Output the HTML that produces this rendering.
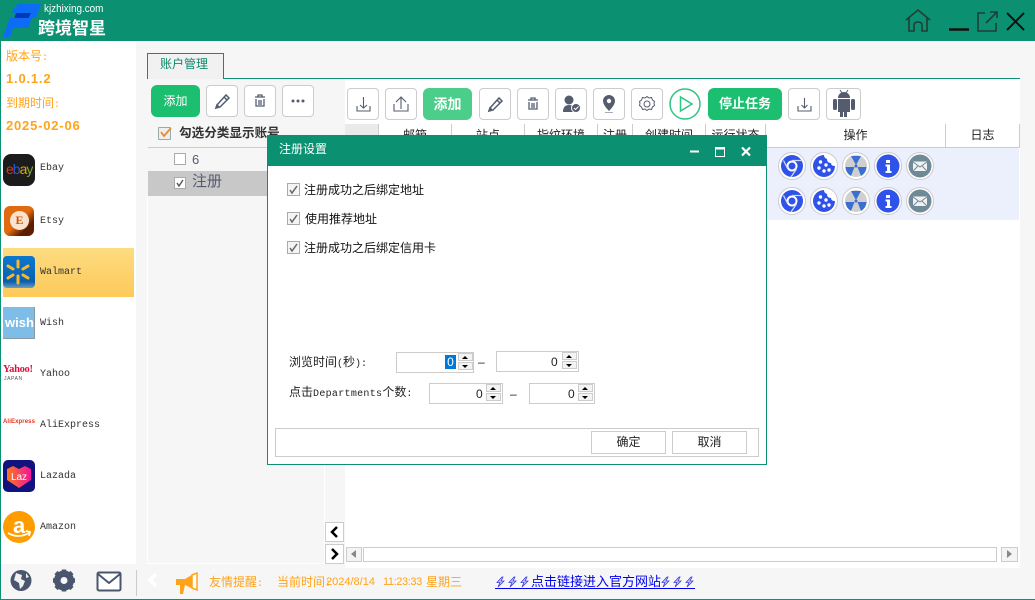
<!DOCTYPE html>
<html lang="zh"><head><meta charset="utf-8"><title>跨境智星</title>
<style>
*{box-sizing:border-box}
html,body{margin:0;padding:0}
body{width:1035px;height:600px;overflow:hidden;position:relative;background:#f6f6f6;font-family:"Liberation Sans","WenQuanYi Zen Hei","Noto Sans CJK SC",sans-serif;font-size:12px;color:#222}
.a,.a *{position:absolute}
.a{position:absolute}
.t{position:absolute;white-space:nowrap;line-height:1}
.btn{position:absolute;top:0;width:32px;height:32px;background:#fff;border:1px solid #ccc;border-radius:4px}
.btn svg{position:absolute;left:0;top:0}
.g{position:absolute;border-radius:6px;color:#fff;text-align:center;font-weight:bold;font-size:14px;line-height:32px;background:#1bbf6f}
.m{position:absolute;left:40px;font:10px "Liberation Mono",monospace;color:#333;white-space:nowrap;line-height:12px}
.p{font:10px "Liberation Mono",monospace}
.cb{position:absolute;width:13px;height:13px;background:#f4f4f4;border:1px solid #aaa}
.cb svg{position:absolute;left:0;top:0}
.th{position:absolute;top:124px;height:24px;border-right:1px solid #ccc;text-align:center;font-size:12px;line-height:23px;color:#222;background:#fff}
.spin{position:absolute;background:#fff;border:1px solid #ccc;height:21px}
.ud{position:absolute;top:1px;width:15px;height:17px;background:#fff}
.ud i{position:absolute;left:0;width:15px;height:8px;background:#f3f3f3;border:1px solid #ccc}
.ud b{position:absolute;left:4px;width:0;height:0;border-left:3.5px solid transparent;border-right:3.5px solid transparent}
.ic{position:absolute;width:28px;height:28px;border-radius:50%;background:#fff;border:1px solid #ccc}
.ic svg{position:absolute;left:1px;top:1px}
.dbtn{position:absolute;top:431px;height:23px;width:75px;background:#fff;border:1px solid #ccc;text-align:center;line-height:21px;font-size:12px}
.or{color:#ffa31a}
</style></head><body>

<!-- header -->
<div class="a" style="left:0;top:0;width:1035px;height:41px;background:#0b9172"></div>
<svg class="a" style="left:0;top:0" width="110" height="41" viewBox="0 0 110 41">
<path d="M17 4H41L36 18H28L30 13H15z" fill="#0d6cf5"/>
<path d="M14 8h8l-2 5h-8z" fill="#0d6cf5"/>
<path d="M16 13H31L28 19H14z" fill="#0637b8"/>
<path d="M10 18H32L28 28H13L10 37H3z" fill="#0d6cf5"/>
</svg>
<div class="t" style="left:44px;top:4px;font-size:11px;color:#fff;transform:scaleX(.9);transform-origin:0 0">kjzhixing.com</div>
<div class="t" style="left:38px;top:20px;font-size:17px;font-weight:bold;color:#fff">跨境智星</div>
<svg class="a" style="left:900px;top:5px" width="135" height="30" viewBox="0 0 135 30" fill="none" stroke="#223c37" stroke-width="1.600">
<path d="M6 15 18 5l12 10M9 13v13h5v-6q0-3 4-3t4 3v6h5V13"/>
<path d="M49 24.500h20" stroke="#111" stroke-width="2.400"/>
<path d="M85 8h-7v18h18v-8M86 18 96 8M90 7h7v6"/>
<path d="M107 8 124 25M124 8 107 25" stroke="#111" stroke-width="2"/>
</svg>

<!-- sidebar -->
<div class="a" style="left:0;top:41px;width:1px;height:559px;background:#0b9172"></div>
<div class="a" style="left:1px;top:41px;width:135px;height:523px;background:#fff"></div>
<div class="t or" style="left:6px;top:50px;font-size:12px">版本号<span class="p">:</span></div>
<div class="t or" style="left:6px;top:71px;font:bold 13px 'Liberation Sans',sans-serif;letter-spacing:.8px">1.0.1.2</div>
<div class="t or" style="left:6px;top:97px;font-size:12px">到期时间<span class="p">:</span></div>
<div class="t or" style="left:6px;top:118px;font:bold 13px 'Liberation Sans',sans-serif;letter-spacing:.8px">2025-02-06</div>

<div class="a" style="left:3px;top:154px;width:32px;height:32px;border-radius:8px;background:#1c1c1c;overflow:hidden"><div class="t" style="left:3px;top:8px;font-size:14px;color:#d32;letter-spacing:-1px">e<span style="position:static;color:#2a5bd0">b</span><span style="position:static;color:#e0a800">a</span><span style="position:static;color:#7a3">y</span></div></div>
<div class="m" style="top:163px;margin-top:0">Ebay</div>
<div class="a" style="left:4px;top:206px;width:30px;height:30px;border-radius:6px;background:linear-gradient(135deg,#e06a10 50%,#5c1e00 75%)"><div class="a" style="left:6px;top:5px;width:19px;height:19px;border-radius:50%;background:#f7e3cf;color:#d35400;font:bold 12px/19px 'Liberation Serif',serif;text-align:center">E</div></div>
<div class="m" style="top:214px">Etsy</div>
<div class="a" style="left:3px;top:248px;width:131px;height:49px;background:linear-gradient(#fddc80,#fdc95a)"></div>
<div class="a" style="left:3px;top:256px;width:32px;height:32px;border-radius:4px;background:linear-gradient(#0b78d0,#0a5fae 80%,#6d9dbf)">
<svg width="32" height="32" viewBox="0 0 32 32" stroke="#fbb72c" stroke-width="3" stroke-linecap="round"><path d="M15 5v6M15 20v7M5 10l5 3M25 10l-5 3M5 22l5-3M25 22l-5-3"/></svg></div>
<div class="m" style="top:265px">Walmart</div>
<div class="a" style="left:3px;top:307px;width:32px;height:32px;background:#7dbde8;border-right:1px solid #8a9aa5;border-bottom:1px solid #8a9aa5"><div class="t" style="left:2px;top:9px;font-size:13px;font-weight:bold;color:#fff">wish</div></div>
<div class="m" style="top:316px">Wish</div>
<div class="t" style="left:3px;top:364px;font:bold 10.500px 'Liberation Serif',serif;color:#e0103a;letter-spacing:-.3px">Yahoo!</div>
<div class="t" style="left:4px;top:376px;font:5px 'Liberation Sans',sans-serif;color:#555;letter-spacing:.6px">JAPAN</div>
<div class="m" style="top:367px">Yahoo</div>
<div class="t" style="left:3px;top:419px;font:bold 6px 'Liberation Sans',sans-serif;color:#e8341c;letter-spacing:.1px">AliExpress</div>
<div class="m" style="top:418px">AliExpress</div>
<div class="a" style="left:3px;top:460px;width:32px;height:32px;border-radius:5px;background:#10127e">
<svg width="32" height="32" viewBox="0 0 32 32"><defs><linearGradient id="lz" x1="0" x2="1"><stop offset="0" stop-color="#f7791c"/><stop offset="1" stop-color="#f3149a"/></linearGradient></defs><path d="M4 9l6-3 6 3 6-3 6 3v11l-12 8L4 20z" fill="url(#lz)"/><text x="16" y="20" font-size="10" fill="#fff" text-anchor="middle" font-family="Liberation Sans">Laz</text></svg></div>
<div class="m" style="top:469px">Lazada</div>
<div class="a" style="left:3px;top:511px;width:32px;height:32px;border-radius:50%;background:#ff9c00">
<div class="t" style="left:10px;top:2px;font:bold 22px 'Liberation Sans',sans-serif;color:#fff">a</div>
<svg width="32" height="32" viewBox="0 0 32 32" fill="none" stroke="#fff" stroke-width="1.800"><path d="M5 22q10 6 21 0M23 20l4 1-1 4"/></svg></div>
<div class="m" style="top:520px">Amazon</div>

<!-- tab -->
<div class="a" style="left:147px;top:53px;width:77px;height:26px;background:#f1f1f1;border:1px solid #0b9172;border-bottom:0"></div>
<div class="t" style="left:160px;top:58px;font-size:12px;color:#0b8a6c">账户管理</div>
<div class="a" style="left:224px;top:78px;width:796px;height:1px;background:#0b9172"></div>

<!-- left account panel -->
<div class="a" style="left:148px;top:79px;width:197px;height:84px;background:#f6f6f6"></div>
<div class="g" style="left:151px;top:85px;width:49px;height:32px;font-weight:normal;font-size:12px">添加</div>
<div class="a" style="left:206px;top:85px;width:108px;height:32px">
<div class="btn" style="left:0"><svg width="30" height="30" viewBox="0 0 30 30" fill="none" stroke="#555c70" stroke-width="1.500"><path d="M10 19l-1 3 4-1 9-9-3-3zM17 11l3 3"/><path d="M10 19l2 2-3 1z" fill="#555c70"/></svg></div>
<div class="btn" style="left:38px"><svg width="30" height="30" viewBox="0 0 30 30" fill="none" stroke="#555c70" stroke-width="1.300"><path d="M10 11h10M13 11V9h4v2M11 13v7h8v-7M14 14v5M16 14v5"/></svg></div>
<div class="btn" style="left:76px"><svg width="30" height="30" viewBox="0 0 30 30" fill="#555c70"><circle cx="10" cy="15" r="1.500"/><circle cx="15" cy="15" r="1.500"/><circle cx="20" cy="15" r="1.500"/></svg></div>
</div>
<div class="a" style="left:158px;top:127px;width:13px;height:13px;background:#eee;border:1px solid #9aa;border-radius:1px"><svg class="a" style="left:0;top:-2px" width="14" height="14" viewBox="0 0 14 14" fill="none" stroke="#e0902a" stroke-width="1.800"><path d="M2 6l3 4 7-8"/></svg></div>
<div class="t" style="left:179px;top:127px;font-size:12.600px;font-weight:bold;color:#333">勾选分类显示账号</div>
<div class="a" style="left:148px;top:147px;width:176px;height:1px;background:#ccc"></div>
<div class="a" style="left:148px;top:148px;width:119px;height:22px;background:#f6f6f6"></div>
<div class="cb" style="left:174px;top:153px;background:#fff;width:12px;height:12px"></div>
<div class="t" style="left:192px;top:153px;font-size:13px;color:#555c70">6</div>
<div class="a" style="left:148px;top:171px;width:119px;height:25px;background:#c8c8c8"></div>
<div class="cb" style="left:174px;top:177px;background:#fff;width:12px;height:12px"><svg width="10" height="10" viewBox="0 0 10 10" fill="none" stroke="#555" stroke-width="1.400"><path d="M2 5l2 3 4-6"/></svg></div>
<div class="t" style="left:192px;top:174px;font-size:15px;color:#555c70">注册</div>

<!-- lower left panel -->
<div class="a" style="left:147px;top:196px;width:178px;height:368px;border:1px solid #fff;border-top:0;background:#f6f6f6"></div>

<!-- main white -->
<div class="a" style="left:345px;top:79px;width:675px;height:489px;background:#fff"></div>
<div class="a" style="left:325px;top:196px;width:20px;height:372px;background:#f6f6f6"></div>

<!-- toolbar -->
<div class="a" style="left:347px;top:88px;width:520px;height:32px">
<div class="btn" style="left:0"><svg width="30" height="30" viewBox="0 0 30 30" fill="none" stroke="#555c70" stroke-width="1.100"><path d="M9 17v5h13v-5M15.500 8v11M12 16l3.500 3 3.500-3"/></svg></div>
<div class="btn" style="left:38px"><svg width="30" height="30" viewBox="0 0 30 30" fill="none" stroke="#555c70" stroke-width="1.100"><path d="M8 15v7h14v-7M15 20V8M10 13l5-5 5 5"/></svg></div>
<div class="g" style="left:76px;top:0;width:49px;height:32px;background:#4bce8a">添加</div>
<div class="btn" style="left:132px"><svg width="30" height="30" viewBox="0 0 30 30" fill="none" stroke="#555c70" stroke-width="1.500"><path d="M10 19l-1 3 4-1 9-9-3-3zM17 11l3 3"/><path d="M10 19l2 2-3 1z" fill="#555c70"/></svg></div>
<div class="btn" style="left:170px"><svg width="30" height="30" viewBox="0 0 30 30" fill="none" stroke="#555c70" stroke-width="1.300"><path d="M10 11h10M13 11V9h4v2M11 13v7h8v-7M14 14v5M16 14v5"/></svg></div>
<div class="btn" style="left:208px"><svg width="30" height="30" viewBox="0 0 30 30"><circle cx="13" cy="11" r="4.500" fill="#555c70"/><path d="M7 23q0-7 6-7 3 0 5 2v5z" fill="#555c70"/><circle cx="20" cy="19" r="4.500" fill="#555c70" stroke="#fff"/><path d="M18 19l1.500 1.500 3-3" fill="none" stroke="#fff"/></svg></div>
<div class="btn" style="left:246px"><svg width="30" height="30" viewBox="0 0 30 30"><path d="M15 6a6 6 0 0 0-6 6q0 4 6 10 6-6 6-10a6 6 0 0 0-6-6z" fill="#555c70"/><circle cx="15" cy="12" r="2.200" fill="#fff"/><path d="M11 23.500h8" stroke="#aab" fill="none"/></svg></div>
<div class="btn" style="left:284px"><svg width="30" height="30" viewBox="0 0 30 30" fill="none" stroke="#555c70"><path d="M15 8l2 1.500 2.500-.5 1 2.500 2 1.500-.5 2 .5 2-2 1.500-1 2.500-2.500-.5-2 1.500-2-1.500-2.500.5-1-2.500-2-1.500.5-2-.5-2 2-1.500 1-2.500 2.500.5z" transform="translate(0 -.5)"/><circle cx="15" cy="15" r="3"/></svg></div>
<svg class="a" style="left:322px;top:0" width="32" height="32" viewBox="0 0 32 32" fill="none" stroke="#2fc482" stroke-width="1.500"><circle cx="16" cy="16" r="15"/><path d="M11.500 9v14L23 16z"/></svg>
<div class="g" style="left:361px;top:0;width:74px;height:32px;background:#1bbf6f;font-size:13px">停止任务</div>
<div class="btn" style="left:441px"><svg width="30" height="30" viewBox="0 0 30 30" fill="none" stroke="#555c70" stroke-width="1.100"><path d="M9 17v5h13v-5M15.500 9v10M12.500 16l3 3 3-3"/></svg></div>
<div class="btn" style="left:479px;width:35px"><svg width="33" height="30" viewBox="0 0 33 30" fill="#555c70"><path d="M11 9a6 6 0 0 1 12 0z"/><path d="M11 10h12v13h-3v5h-3v-5h-1v5h-3v-5h-2z"/><rect x="6" y="10" width="4" height="11" rx="1.500"/><rect x="24" y="10" width="4" height="11" rx="1.500"/><path d="M13 1l2 3M21 1l-2 3" stroke="#555c70"/></svg></div>
</div>

<!-- table header -->
<div class="a" style="left:345px;top:124px;width:34px;height:24px;background:#eaeaea;border-right:1px solid #ccc"></div>
<div class="th" style="left:379px;width:73px">邮箱</div>
<div class="th" style="left:452px;width:73px">站点</div>
<div class="th" style="left:525px;width:73px">指纹环境</div>
<div class="th" style="left:598px;width:35px">注册</div>
<div class="th" style="left:633px;width:73px">创建时间</div>
<div class="th" style="left:706px;width:60px">运行状态</div>
<div class="th" style="left:766px;width:180px">操作</div>
<div class="th" style="left:946px;width:74px">日志</div>
<div class="a" style="left:345px;top:147px;width:675px;height:1px;background:#ccc"></div>
<div class="a" style="left:767px;top:148px;width:252px;height:72px;background:#eceffc"></div>

<!-- row icons -->
<div class="a" style="left:778px;top:152px;width:160px;height:28px">
<div class="ic" style="left:0"><svg width="24" height="24" viewBox="0 0 24 24"><circle cx="12" cy="12" r="11" fill="#2f52e8"/><circle cx="12" cy="12" r="4.500" fill="#2f52e8" stroke="#fff" stroke-width="2"/><path d="M12 6.500h10.500M7.300 14 3.500 6.500M16.500 15 11 23" stroke="#d0d7f5" stroke-width="1.300" fill="none"/></svg></div>
<div class="ic" style="left:32px"><svg width="24" height="24" viewBox="0 0 24 24"><path d="M12 1a11 11 0 1 0 11 11q-4 0-4-3-4 0-4-4-3-1-3-4z" fill="#2f52e8"/><g fill="#fff"><circle cx="8.500" cy="8" r="1.700"/><circle cx="14" cy="11" r="1.700"/><circle cx="7" cy="14" r="1.700"/><circle cx="12" cy="17" r="1.700"/><circle cx="17" cy="16" r="1.700"/></g></svg></div>
<div class="ic" style="left:64px"><svg width="24" height="24" viewBox="0 0 24 24"><circle cx="12" cy="12" r="11" fill="#cfcfcf"/><path d="M7 2h10l-5 9zM1.500 13h9L7 22q-5-3-5.500-9zM22.500 13h-9l3.500 9q5-3 5.500-9z" fill="#3a6fd0"/><circle cx="12" cy="12" r="1.500" fill="#3a6fd0"/></svg></div>
<div class="ic" style="left:96px"><svg width="24" height="24" viewBox="0 0 24 24"><circle cx="12" cy="12" r="11.500" fill="#2f52e8"/><path d="M10 6h4v3h-4zM9.500 10.500H14V17h1.500v2h-6v-2H11v-4.500H9.500z" fill="#fff"/></svg></div>
<div class="ic" style="left:128px"><svg width="24" height="24" viewBox="0 0 24 24"><circle cx="12" cy="12" r="11.500" fill="#6f8a97"/><rect x="5" y="7.500" width="14" height="9.500" fill="#f2f2f2"/><path d="M5 8l7 5 7-5M5 17l5-5M19 17l-5-5" fill="none" stroke="#6f8a97"/></svg></div>
</div>
<div class="a" style="left:778px;top:187px;width:160px;height:28px">
<div class="ic" style="left:0"><svg width="24" height="24" viewBox="0 0 24 24"><circle cx="12" cy="12" r="11" fill="#2f52e8"/><circle cx="12" cy="12" r="4.500" fill="#2f52e8" stroke="#fff" stroke-width="2"/><path d="M12 6.500h10.500M7.300 14 3.500 6.500M16.500 15 11 23" stroke="#d0d7f5" stroke-width="1.300" fill="none"/></svg></div>
<div class="ic" style="left:32px"><svg width="24" height="24" viewBox="0 0 24 24"><path d="M12 1a11 11 0 1 0 11 11q-4 0-4-3-4 0-4-4-3-1-3-4z" fill="#2f52e8"/><g fill="#fff"><circle cx="8.500" cy="8" r="1.700"/><circle cx="14" cy="11" r="1.700"/><circle cx="7" cy="14" r="1.700"/><circle cx="12" cy="17" r="1.700"/><circle cx="17" cy="16" r="1.700"/></g></svg></div>
<div class="ic" style="left:64px"><svg width="24" height="24" viewBox="0 0 24 24"><circle cx="12" cy="12" r="11" fill="#cfcfcf"/><path d="M7 2h10l-5 9zM1.500 13h9L7 22q-5-3-5.500-9zM22.500 13h-9l3.500 9q5-3 5.500-9z" fill="#3a6fd0"/><circle cx="12" cy="12" r="1.500" fill="#3a6fd0"/></svg></div>
<div class="ic" style="left:96px"><svg width="24" height="24" viewBox="0 0 24 24"><circle cx="12" cy="12" r="11.500" fill="#2f52e8"/><path d="M10 6h4v3h-4zM9.500 10.500H14V17h1.500v2h-6v-2H11v-4.500H9.500z" fill="#fff"/></svg></div>
<div class="ic" style="left:128px"><svg width="24" height="24" viewBox="0 0 24 24"><circle cx="12" cy="12" r="11.500" fill="#6f8a97"/><rect x="5" y="7.500" width="14" height="9.500" fill="#f2f2f2"/><path d="M5 8l7 5 7-5M5 17l5-5M19 17l-5-5" fill="none" stroke="#6f8a97"/></svg></div>
</div>

<!-- side arrows and scrollbar -->
<div class="a" style="left:325px;top:522px;width:19px;height:20px;background:#fff;border:1px solid #ccc"><svg class="a" style="left:0;top:0" width="17" height="18" viewBox="0 0 17 18" fill="none" stroke="#000" stroke-width="2.500"><path d="M11 4 6 9l5 5"/></svg></div>
<div class="a" style="left:325px;top:544px;width:19px;height:20px;background:#fff;border:1px solid #ccc"><svg class="a" style="left:0;top:0" width="17" height="18" viewBox="0 0 17 18" fill="none" stroke="#000" stroke-width="2.500"><path d="M6 4l5 5-5 5"/></svg></div>
<div class="a" style="left:363px;top:547px;width:634px;height:15px;background:#fff;border:1px solid #ccc"></div>
<div class="a" style="left:346px;top:547px;width:16px;height:15px;border:1px solid #ccc;background:#f4f4f4"><div class="a" style="left:4px;top:2px;border-top:4px solid transparent;border-bottom:4px solid transparent;border-right:5px solid #888"></div></div>
<div class="a" style="left:1001px;top:547px;width:17px;height:15px;border:1px solid #ccc;background:#f4f4f4"><div class="a" style="left:5px;top:2px;border-top:4px solid transparent;border-bottom:4px solid transparent;border-left:5px solid #888"></div></div>

<!-- footer -->
<div class="a" style="left:0;top:599px;width:1035px;height:1px;background:#0b9172"></div>
<svg class="a" style="left:8px;top:568px" width="130" height="28" viewBox="0 0 130 28">
<circle cx="13" cy="12.500" r="10.500" fill="#4a566e"/><path d="M8 5l6 2-1 4 4 2-2 5-3 3-1-6-5-3zM18 5l3 4-3 1z" fill="#f0f0f0"/>
<g transform="translate(56 12.500)"><circle r="7.500" fill="none" stroke="#4a566e" stroke-width="5"/><g stroke="#4a566e" stroke-width="4.500"><path d="M0-11V11M-11 0H11M-8-8 8 8M8-8-8 8"/></g><circle r="3.500" fill="#f6f6f6"/></g>
<rect x="89.500" y="4.500" width="23" height="18" rx="1.500" fill="#fff" stroke="#4a566e" stroke-width="2"/><path d="M90 6l11 9 11-9" fill="none" stroke="#4a566e" stroke-width="2"/>
</svg>
<div class="a" style="left:136px;top:570px;width:1px;height:26px;background:#ccc"></div>
<svg class="a" style="left:146px;top:572px" width="14" height="16" viewBox="0 0 14 16" fill="none" stroke="#fff" stroke-width="3.500"><path d="M10 2 4 8l6 6"/></svg>
<svg class="a" style="left:172px;top:570px" width="28" height="26" viewBox="0 0 28 26"><path d="M4 9h9L23 3v17l-10-5H4z" fill="#ffa31a"/><path d="M20 5l5-2v17l-5-2z" fill="#fff" stroke="#ffa31a" stroke-width="1.500"/><path d="M8 15h5l-2 9H8z" fill="#ffa31a"/></svg>
<div class="t or" style="left:209px;top:576px;font-size:12px">友情提醒<span class="p">:</span></div>
<div class="t or" style="left:277px;top:576px;font-size:12px">当前时间<span class="p">:</span></div>
<div class="t or" style="left:326px;top:577px;font-size:11px">2024/8/14</div>
<div class="t or" style="left:383px;top:577px;font-size:11px;letter-spacing:-.4px">11:23:33</div>
<div class="t or" style="left:426px;top:576px;font-size:12px">星期三</div>
<div class="a" style="left:495px;top:588px;width:200px;height:1px;background:#0000ee"></div>
<svg class="a" style="left:495px;top:576px" width="36" height="12" viewBox="0 0 36 12" fill="#cfcff8" stroke="#3a3ae0" stroke-width=".8"><path id="bz" d="M7 1 2 6.500H5L3 11 9 5H6L8 1z"/><path d="M19 1 14 6.500H17L15 11 21 5H18L20 1z"/><path d="M31 1 26 6.500H29L27 11 33 5H30L32 1z"/></svg>
<div class="t" style="left:531px;top:575px;font-size:13px;color:#0000ee">点击链接进入官方网站</div>
<svg class="a" style="left:660px;top:576px" width="36" height="12" viewBox="0 0 36 12" fill="#cfcff8" stroke="#3a3ae0" stroke-width=".8"><path d="M7 1 2 6.500H5L3 11 9 5H6L8 1z"/><path d="M19 1 14 6.500H17L15 11 21 5H18L20 1z"/><path d="M31 1 26 6.500H29L27 11 33 5H30L32 1z"/></svg>

<!-- dialog -->
<div class="a" style="left:267px;top:135px;width:500px;height:330px;background:#fff;border:1px solid #0b9172"></div>
<div class="a" style="left:267px;top:135px;width:500px;height:31px;background:#0b9172"></div>
<div class="t" style="left:279px;top:143px;font-size:12px;color:#fff">注册设置</div>
<svg class="a" style="left:685px;top:142px" width="70" height="18" viewBox="0 0 70 18" fill="none" stroke="#fff">
<path d="M5 9.500h9" stroke-width="2"/>
<rect x="30.500" y="5.500" width="9" height="9"/><path d="M30 6.500h10" stroke-width="2"/>
<path d="M57 5.500l8 8M65 5.500l-8 8" stroke-width="2.200"/>
</svg>
<div class="cb" style="left:287px;top:183px"><svg width="11" height="11" viewBox="0 0 11 11" fill="none" stroke="#666" stroke-width="1.500"><path d="M2 6l2 3 5-7"/></svg></div>
<div class="t" style="left:304px;top:184px;font-size:12px;color:#111">注册成功之后绑定地址</div>
<div class="cb" style="left:287px;top:212px"><svg width="11" height="11" viewBox="0 0 11 11" fill="none" stroke="#666" stroke-width="1.500"><path d="M2 6l2 3 5-7"/></svg></div>
<div class="t" style="left:305px;top:213px;font-size:12px;color:#111">使用推荐地址</div>
<div class="cb" style="left:287px;top:241px"><svg width="11" height="11" viewBox="0 0 11 11" fill="none" stroke="#666" stroke-width="1.500"><path d="M2 6l2 3 5-7"/></svg></div>
<div class="t" style="left:304px;top:242px;font-size:12px;color:#111">注册成功之后绑定信用卡</div>

<div class="t" style="left:289px;top:356px;font-size:12px;color:#222">浏览时间<span class="p">(</span>秒<span class="p">):</span></div>
<div class="spin" style="left:396px;top:352px;width:78px;height:21px"></div>
<div class="a" style="left:445px;top:355px;width:11px;height:14px;background:#0078d7;color:#fff;font-size:12px;line-height:14px;text-align:center">0</div>
<div class="ud" style="left:458px;top:353px"><i style="top:0"></i><i style="top:9px"></i><b style="top:3px;border-bottom:3px solid #000"></b><b style="top:12px;border-top:3px solid #000"></b></div>
<div class="t" style="left:478px;top:356px;font-size:12px">–</div>
<div class="spin" style="left:496px;top:351px;width:83px;height:21px"></div>
<div class="t" style="left:551px;top:356px;font-size:12px">0</div>
<div class="ud" style="left:562px;top:352px"><i style="top:0"></i><i style="top:9px"></i><b style="top:3px;border-bottom:3px solid #000"></b><b style="top:12px;border-top:3px solid #000"></b></div>

<div class="t" style="left:289px;top:386px;font-size:12px;color:#222">点击<span class="p" style="letter-spacing:.3px">Departments</span>个数<span class="p">:</span></div>
<div class="spin" style="left:429px;top:383px;width:74px;height:21px"></div>
<div class="t" style="left:476px;top:388px;font-size:12px">0</div>
<div class="ud" style="left:486px;top:384px"><i style="top:0"></i><i style="top:9px"></i><b style="top:3px;border-bottom:3px solid #000"></b><b style="top:12px;border-top:3px solid #000"></b></div>
<div class="t" style="left:510px;top:388px;font-size:12px">–</div>
<div class="spin" style="left:529px;top:383px;width:66px;height:21px"></div>
<div class="t" style="left:568px;top:388px;font-size:12px">0</div>
<div class="ud" style="left:578px;top:384px"><i style="top:0"></i><i style="top:9px"></i><b style="top:3px;border-bottom:3px solid #000"></b><b style="top:12px;border-top:3px solid #000"></b></div>

<div class="a" style="left:275px;top:428px;width:484px;height:29px;border:1px solid #ccc;background:#fff"></div>
<div class="dbtn" style="left:591px">确定</div>
<div class="dbtn" style="left:672px">取消</div>

<style>.m{margin-top:2px}</style>
</body></html>
